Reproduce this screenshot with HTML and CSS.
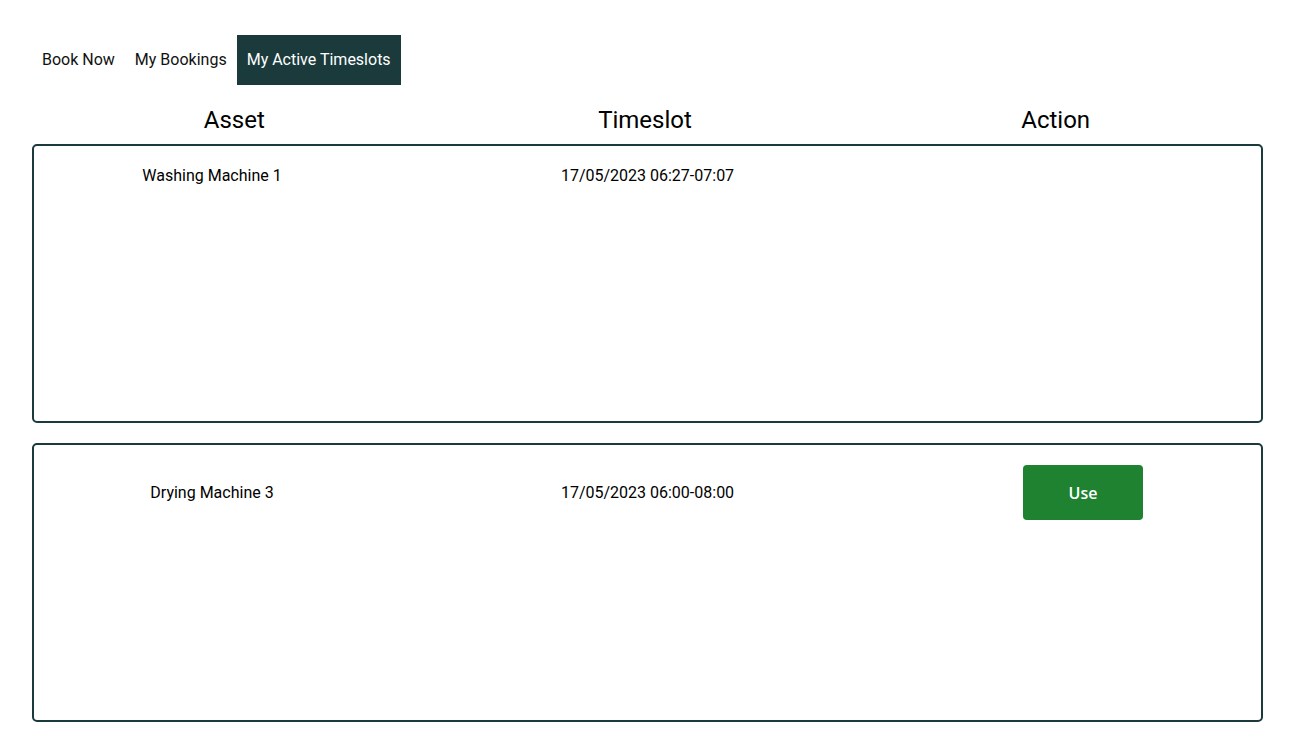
FILE: index.html
```html
<!DOCTYPE html>
<html>
<head>
<meta charset="utf-8">
<link rel="stylesheet" href="styles.css">
</head>
<body>
<div class="page">
  <nav class="tabs">
    <span class="tab">Book Now</span>
    <span class="tab">My Bookings</span>
    <span class="tab active">My Active Timeslots</span>
  </nav>
  <div class="head-row">
    <div class="head">Asset</div>
    <div class="head">Timeslot</div>
    <div class="head">Action</div>
  </div>
  <div class="card">
    <div class="row">
      <div class="cell">Washing Machine 1</div>
      <div class="cell">17/05/2023 06:27-07:07</div>
      <div class="cell"></div>
    </div>
  </div>
  <div class="card">
    <div class="row">
      <div class="cell">Drying Machine 3</div>
      <div class="cell">17/05/2023 06:00-08:00</div>
      <div class="cell"><button class="use">Use</button></div>
    </div>
  </div>
</div>
</body>
</html>
```
FILE: styles.css
```css
html, body {
  margin: 0;
  background: #fff;
}
body {
  font-family: Roboto, "Liberation Sans", sans-serif;
  color: #000;
}
.page {
  padding: 35px 36px 0 32px;
}
.tabs {
  display: flex;
  height: 50px;
}
.tab {
  padding: 0 10px;
  font-size: 16px;
  line-height: 50px;
  color: #111;
}
.tab.active {
  background: #1a3a3b;
  color: #fff;
}
.head-row {
  display: grid;
  grid-template-columns: repeat(3, 1fr);
  margin: 0 2px 0 -3px;
  padding: 21px 0 10px;
}
.head {
  text-align: center;
  font-size: 24px;
  line-height: 28px;
}
.card {
  box-sizing: border-box;
  height: 279px;
  border: 2px solid #1a3a3b;
  border-radius: 5px;
  padding: 20px 0 19px;
  margin-bottom: 20px;
}
.row {
  display: grid;
  grid-template-columns: 356px 356px 356px;
  justify-content: space-between;
  align-items: center;
}
.cell {
  display: flex;
  justify-content: center;
  font-size: 16px;
  line-height: 19px;
}
.use {
  width: 120px;
  height: 55px;
  border: none;
  border-radius: 4px;
  background: #1e8230;
  color: #fff;
  font-family: "Open Sans", "Noto Sans", sans-serif;
  font-weight: 600;
  font-size: 16px;
}
```
